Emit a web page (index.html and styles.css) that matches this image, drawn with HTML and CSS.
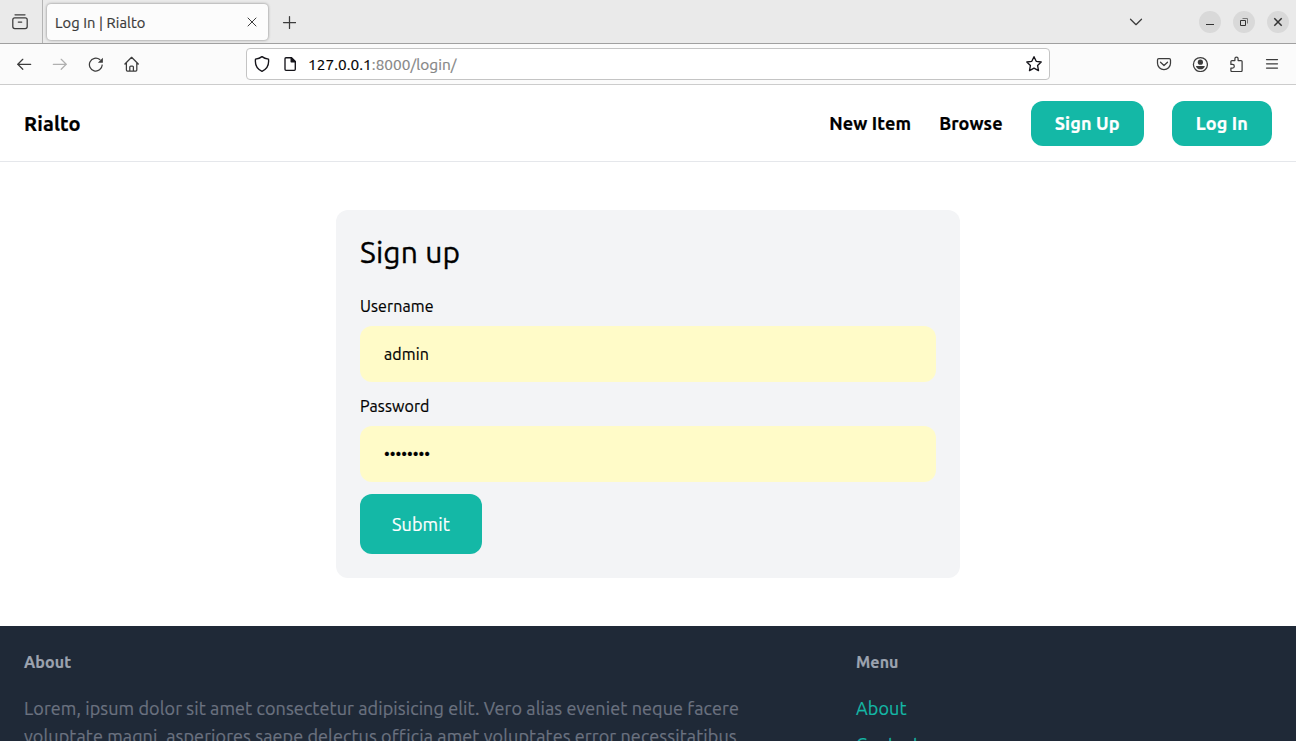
FILE: index.html
```html
<!DOCTYPE html>
<html lang="en">
<head>
<meta charset="utf-8">
<title>Log In | Rialto</title>
<link rel="stylesheet" href="styles.css">
</head>
<body>
<header class="tabbar">
  <div class="recent"><svg class="icon" width="18" height="18" viewBox="0 0 18 18"><path d="M4 1.8h10"/><rect x="1.8" y="4.8" width="14.4" height="10.8" rx="2"/><path d="M7.3 9h3.4"/></svg></div>
  <div class="tab"><span class="tab-title">Log In | Rialto</span><svg class="icon thin" width="10" height="10" viewBox="0 0 10 10"><path d="M1 1l8 8M9 1L1 9"/></svg></div>
  <svg class="icon newtab" width="14" height="14" viewBox="0 0 14 14"><path d="M7.5 1.5v12M1.5 7.5h12"/></svg>
  <div class="window-controls">
    <svg class="icon chevron" width="14" height="14" viewBox="0 0 14 14"><path d="M1.5 4.2L7 9.7l5.5-5.5"/></svg>
    <svg class="control" width="22" height="22" viewBox="0 0 22 22"><path d="M7 13.5h8"/></svg>
    <svg class="control" width="22" height="22" viewBox="0 0 22 22"><path d="M7.5 9.5h5v5h-5z"/><path class="faint" d="M9.5 7.5h5v5"/></svg>
    <svg class="control" width="22" height="22" viewBox="0 0 22 22"><path class="close" d="M7.3 7.3l7.4 7.4M14.7 7.3l-7.4 7.4"/></svg>
  </div>
</header>
<div class="toolbar">
  <div class="navigation">
    <svg class="icon" width="16" height="16" viewBox="0 0 16 16"><path d="M14.7 8.3H1.6M6.8 3.3l-5 5 5 5"/></svg>
    <svg class="icon disabled" width="16" height="16" viewBox="0 0 16 16"><path d="M1.3 8.3h13.1M9.2 3.3l5 5-5 5"/></svg>
    <svg class="icon" width="16" height="16" viewBox="0 0 16 16"><path d="M14.2 9A6.4 6.4 0 1 1 11.8 3.6"/><path class="fill" d="M14.9 1.8v5h-5z"/></svg>
    <svg class="icon" width="16" height="16" viewBox="0 0 16 16"><path d="M.9 8L7.6 1.3 14.3 8M2.4 6.8V14q0 1 1 1h8.4q1 0 1-1V6.8M5.8 15v-4q0-1 1-1h1.6q1 0 1 1v4"/></svg>
  </div>
  <div class="address">
    <svg class="icon dark" width="16" height="18" viewBox="0 0 16 18"><path d="M8 1.6Q10.5 3.6 14.5 4.2C15.2 10 12.6 14.2 8 16.3 3.4 14.2.8 10 1.5 4.2Q5.5 3.6 8 1.6z"/></svg>
    <svg class="icon dark page" width="14" height="16" viewBox="0 0 14 16"><path d="M3 1.7h5.5l3.8 3.8v7.8q0 1-1 1H3q-1 0-1-1V2.7q0-1 1-1z"/><path class="solid" d="M8.2 1.7v4h4z"/></svg>
    <span class="url"><span class="host">127.0.0.1</span>:8000/login/</span>
    <svg class="icon dark star" width="18" height="18" viewBox="0 0 18 18"><path d="M9 1.7l2.2 4.6 5 .7-3.6 3.5.9 5.1L9 13.2l-4.5 2.4.9-5.1L1.8 7l5-.7z"/></svg>
  </div>
  <div class="actions">
    <svg class="icon" width="16" height="16" viewBox="0 0 16 16"><path d="M2.8 2.6h10.4q1.3 0 1.3 1.3V7.3a6.5 6.3 0 0 1-13 0V3.9q0-1.3 1.3-1.3z"/><path d="M4.5 6.2L8 9.5l3.5-3.3"/></svg>
    <svg class="icon" width="16" height="16" viewBox="0 0 16 16"><circle cx="8.4" cy="8.5" r="7"/><circle class="fill" cx="8.4" cy="6.2" r="2.6"/><path class="fill" d="M3.9 9.9h9q-1 3.4-4.5 3.4T3.9 9.9z"/></svg>
    <svg class="icon" width="16" height="16" viewBox="0 0 16 16"><path d="M2.9 8V5.6q0-1 1-1h3V2.8a1.6 1.6 0 0 1 3.2 0v1.8h3q1 0 1 1v8.9q0 1-1 1H3.9q-1 0-1-1V12h1.6a1.8 1.8 0 0 0 0-3.6H2.9z"/></svg>
    <svg class="icon" width="16" height="16" viewBox="0 0 16 16"><path d="M2.5 3.5h11M2.5 7.8h11M2.5 12h11"/></svg>
  </div>
</div>
<nav class="site-nav">
  <a class="brand">Rialto</a>
  <div class="links">
    <a>New Item</a><a>Browse</a><a class="button">Sign Up</a><a class="button">Log In</a>
  </div>
</nav>
<main>
  <form class="card">
    <h1>Sign up</h1>
    <label>Username</label>
    <div class="field">admin</div>
    <label>Password</label>
    <div class="field password">••••••••</div>
    <button class="submit" type="button">Submit</button>
  </form>
</main>
<footer>
  <section class="about">
    <h2>About</h2>
    <p>Lorem, ipsum dolor sit amet consectetur adipisicing elit. Vero alias eveniet neque facere<br>voluptate magni, asperiores saepe delectus officia amet voluptates error necessitatibus</p>
  </section>
  <section class="menu">
    <h2>Menu</h2>
    <ul><li>About</li><li>Contact</li></ul>
  </section>
</footer>
</body>
</html>
```
FILE: styles.css
```css
* { box-sizing: border-box; }
body { margin: 0; height: 741px; overflow: hidden; background: #fff; color: #000; font-family: Ubuntu, "Noto Sans", sans-serif; font-size: 16px; line-height: 24px; letter-spacing: .1px; -webkit-text-stroke: .2px; }
h1, h2, p, ul { margin: 0; padding: 0; }
.icon { fill: none; stroke: #3c3c3c; stroke-width: 1.25; stroke-linecap: round; stroke-linejoin: round; flex: none; display: block; }
.icon.dark { stroke: #15141a; stroke-width: 1.35; }
.icon.thin { stroke-width: 1; }
.icon.disabled { stroke: #b0b0b0; }
.icon .solid { fill: #15141a; }
.icon .fill { fill: #3c3c3c; stroke: none; }
.tabbar { height: 44px; background: #eaeaea; border-bottom: 1px solid #a0a0a0; display: flex; align-items: center; }
.recent { width: 43px; height: 43px; border-right: 1px solid #b4b4b4; display: flex; align-items: center; padding-left: 11px; }
.tab { width: 221px; height: 36px; margin: 0 0 0 4px; padding: 2px 11px 0 8px; background: #fcfcfc; border-radius: 4px; box-shadow: 0 0 3px #0007; display: flex; align-items: center; justify-content: space-between; color: #3a3a3a; font-size: 14.67px; }
.tab .icon { margin-top: -2px; }
.newtab { margin-left: 14px; }
.window-controls { margin-left: auto; display: flex; align-items: center; gap: 12px; padding-right: 7px; }
.chevron { margin-right: 44px; }
.control { background: #d9d9d9; border-radius: 50%; fill: none; stroke: #333; stroke-width: 1; display: block; }
.faint { stroke: #777; }
.close { stroke-width: 1.5; }
.toolbar { height: 41px; background: #fbfbfb; border-bottom: 1px solid #ccc; display: flex; align-items: center; padding: 0 16px; }
.navigation { display: flex; gap: 20px; width: 230px; }
.address { width: 804px; height: 32px; background: #fff; border: 1px solid #c4c4c4; border-radius: 4px; display: flex; align-items: center; padding: 0 6px 0 7px; }
.page { margin-left: 13px; }
.url { margin: 1px 0 0 11px; font-size: 15.4px; letter-spacing: .04px; color: #858585; white-space: nowrap; }
.host { color: #000; }
.star { margin-left: auto; }
.actions { margin-left: auto; display: flex; gap: 20px; }
.site-nav { height: 77px; padding: 0 24px; border-bottom: 1px solid #e5e7eb; display: flex; align-items: center; justify-content: space-between; font-weight: 700; letter-spacing: .13px; }
.brand { font-size: 20px; line-height: 28px; padding-top: 2px; }
.links { display: flex; align-items: center; gap: 28px; font-size: 18px; line-height: 28px; white-space: nowrap; }
.button { height: 45px; padding: 0 24px; border-radius: 12px; background: #14b8a6; color: #fff; line-height: 45px; }
main { padding: 48px 0; }
.card { width: 624px; height: 368px; margin: 0 auto; padding: 24px; background: #f3f4f6; border-radius: 12px; }
h1 { font-size: 30px; font-weight: 400; line-height: 36px; margin-bottom: 24px; letter-spacing: .18px; -webkit-text-stroke: .35px; }
.card label { display: block; margin-bottom: 8px; }
.field { height: 56px; padding: 0 24px; margin-bottom: 12px; background: #fffbc8; border-radius: 12px; display: flex; align-items: center; }
.password { letter-spacing: 0; }
.submit { height: 60px; border: 0; padding: 0 32px; border-radius: 12px; background: #14b8a6; color: #fff; font: 400 18px/28px Ubuntu, "Noto Sans", sans-serif; letter-spacing: .1px; display: block; }
footer { height: 115px; overflow: hidden; padding: 24px 24px 0; background: #1f2937; display: grid; grid-template-columns: 832px 1fr; }
h2 { font-size: 16px; font-weight: 700; line-height: 24px; color: #9ca3af; margin-bottom: 20px; }
.about p { font-size: 18px; line-height: 28px; color: #6b7280; white-space: nowrap; }
.menu ul { list-style: none; color: #14b8a6; font-size: 18px; line-height: 28px; }
.menu li { margin-bottom: 8px; }
```
